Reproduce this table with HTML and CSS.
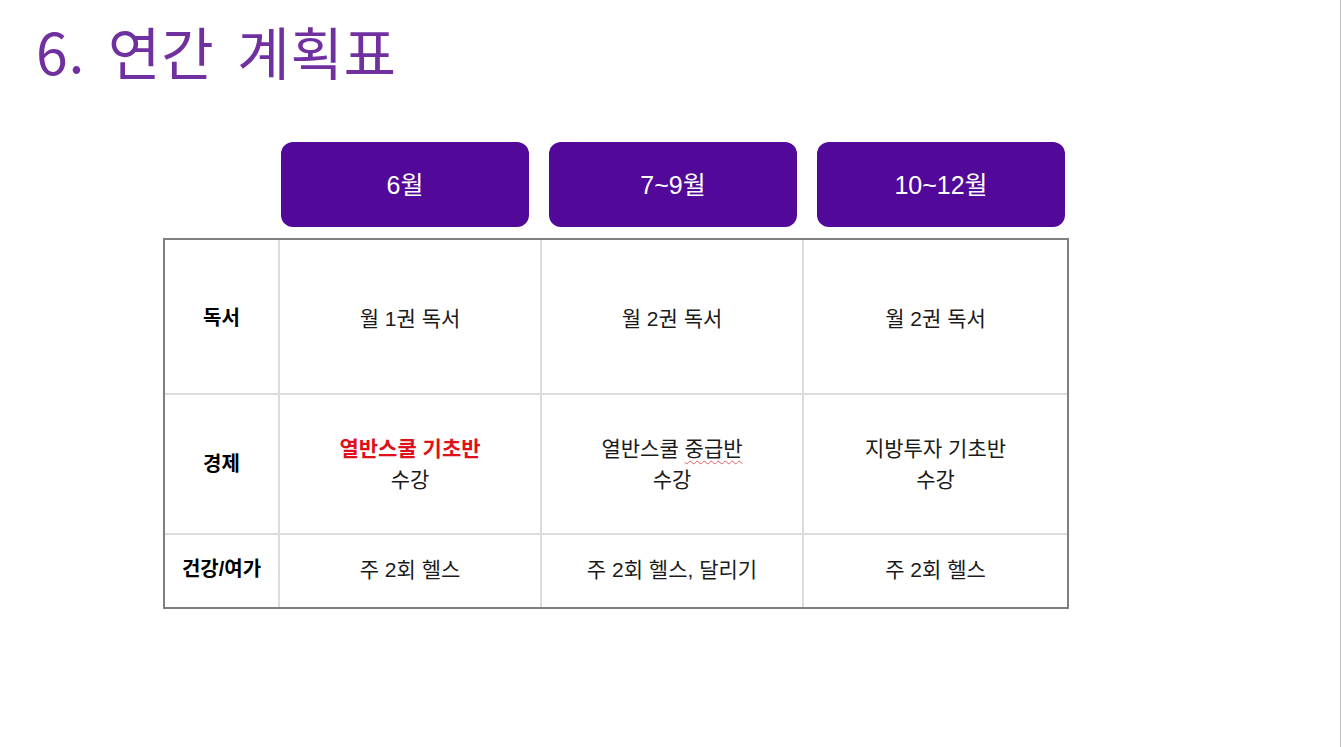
FILE: index.html
```html
<!DOCTYPE html>
<html lang="ko">
<head>
<meta charset="utf-8">
<link rel="stylesheet" href="styles.css">
</head>
<body>
<div class="slide">
  <h1 class="title">6. 연간 계획표</h1>
  <div class="heads">
    <div class="head">6월</div>
    <div class="head">7~9월</div>
    <div class="head">10~12월</div>
  </div>
  <div class="plan">
    <div class="cell label r1"><p>독서</p></div>
    <div class="cell r1"><p>월 1권 독서</p></div>
    <div class="cell r1"><p>월 2권 독서</p></div>
    <div class="cell r1 last"><p>월 2권 독서</p></div>

    <div class="cell label r2"><p>경제</p></div>
    <div class="cell r2"><p><span class="red">열반스쿨 기초반</span><br>수강</p></div>
    <div class="cell r2"><p>열반스쿨 <span class="squiggle">중급반</span><br>수강</p></div>
    <div class="cell r2 last"><p>지방투자 기초반<br>수강</p></div>

    <div class="cell label r3"><p>건강/여가</p></div>
    <div class="cell r3"><p>주 2회 헬스</p></div>
    <div class="cell r3"><p>주 2회 헬스, 달리기</p></div>
    <div class="cell r3 last"><p>주 2회 헬스</p></div>
  </div>
</div>
</body>
</html>
```

FILE: styles.css
```css
html, body {
  margin: 0;
  padding: 0;
  background: #ffffff;
}
.slide {
  width: 1340px;
  height: 747px;
  border-right: 1px solid #bdbdbd;
  box-sizing: content-box;
  display: flex;
  flex-direction: column;
  font-family: "Liberation Sans", "Noto Sans CJK KR", sans-serif;
  color: #111;
}
.title {
  margin: 0;
  padding: 10px 0 0 36px;
  height: 128px;
  box-sizing: border-box;
  font-family: "Noto Sans CJK KR", sans-serif;
  font-weight: 400;
  font-size: 57px;
  line-height: 80px;
  color: #7030a0;
  letter-spacing: 0.8px;
  word-spacing: 6px;
}
.heads {
  margin: 14px 0 0 281px;
  display: flex;
  gap: 20px;
}
.head {
  width: 248px;
  height: 85px;
  background: #52099a;
  border-radius: 12px;
  color: #ffffff;
  font-size: 25px;
  display: flex;
  align-items: center;
  justify-content: center;
  padding-bottom: 4px;
  box-sizing: border-box;
}
.plan {
  margin: 11px 0 0 163px;
  width: 906px;
  display: grid;
  grid-template-columns: 115px 262px 262px 1fr;
  grid-template-rows: 155px 140px 1fr;
  height: 371px;
  border: 2px solid #7f7f7f;
  box-sizing: border-box;
}
.cell {
  display: flex;
  align-items: center;
  justify-content: center;
  text-align: center;
  font-size: 21px;
  line-height: 31px;
  color: #1a1a1a;
  border-right: 2px solid #dcdcdc;
  border-bottom: 2px solid #dcdcdc;
}
.cell p {
  margin: 0;
}
.cell.last {
  border-right: none;
}
.cell.r3 {
  border-bottom: none;
}
.cell.label {
  font-weight: 700;
  font-size: 20px;
  color: #000;
}
.r1 { padding-top: 4px; }
.r3 { padding-bottom: 4px; }
.red {
  color: #e0101a;
  font-weight: 700;
}
.squiggle {
  text-decoration: underline wavy #e06060;
  text-decoration-thickness: 1px;
  text-underline-offset: 4px;
}
```
